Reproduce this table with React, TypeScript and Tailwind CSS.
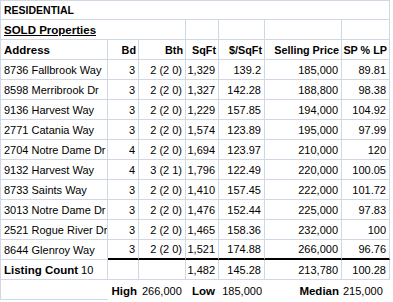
import React from 'react';

const line = 'border-[#d0d7e5]';

const rows = [
  ['8736 Fallbrook Way', '3', '2 (2 0)', '1,329', '139.2', '185,000', '89.81'],
  ['8598 Merribrook Dr', '3', '2 (2 0)', '1,327', '142.28', '188,800', '98.38'],
  ['9136 Harvest Way', '3', '2 (2 0)', '1,229', '157.85', '194,000', '104.92'],
  ['2771 Catania Way', '3', '2 (2 0)', '1,574', '123.89', '195,000', '97.99'],
  ['2704 Notre Dame Dr', '4', '2 (2 0)', '1,694', '123.97', '210,000', '120'],
  ['9132 Harvest Way', '4', '3 (2 1)', '1,796', '122.49', '220,000', '100.05'],
  ['8733 Saints Way', '3', '2 (2 0)', '1,410', '157.45', '222,000', '101.72'],
  ['3013 Notre Dame Dr', '3', '2 (2 0)', '1,476', '152.44', '225,000', '97.83'],
  ['2521 Rogue River Dr', '3', '2 (2 0)', '1,465', '158.36', '232,000', '100'],
  ['8644 Glenroy Way', '3', '2 (2 0)', '1,521', '174.88', '266,000', '96.76'],
];

const headers = ['Address', 'Bd', 'Bth', 'SqFt', '$/SqFt', 'Selling Price', 'SP % LP'];

const Cell = ({
  children,
  className = '',
}: {
  children?: React.ReactNode;
  className?: string;
}) => (
  <div
    className={`flex items-end h-5 pb-[2px] leading-[13px] whitespace-nowrap overflow-hidden ${className}`}
  >
    {children}
  </div>
);

export default function App() {
  return (
    <div
      className="w-[393px] h-[302px] bg-white text-black text-[11px] overflow-hidden"
      style={{ fontFamily: '"Liberation Sans", Arial, sans-serif' }}
    >
      <div className="grid grid-cols-[108px_31px_47px_33px_46px_77px_48px] w-[390px]">
        {/* title rows */}
        <Cell className={`col-span-7 border-l border-t border-r border-b ${line} pl-[3px] font-bold text-[10.5px]`}>
          RESIDENTIAL
        </Cell>
        <Cell className={`col-span-3 border-l border-r border-b ${line} pl-[3px] font-bold text-[11.5px]`}>
          <span className="underline underline-offset-[1px]">SOLD Properties</span>
        </Cell>
        {[0, 1, 2, 3].map((i) => (
          <Cell key={i} className={`border-r border-b ${line}`} />
        ))}

        {/* column headers */}
        {headers.map((h, i) => (
          <Cell
            key={h}
            className={`border-r border-b ${line} font-bold ${
              i === 0 ? 'border-l pl-[3px] text-[11.5px]' : 'justify-end pr-[2px] text-[10.8px]'
            }`}
          >
            {h}
          </Cell>
        ))}

        {/* sold listings */}
        {rows.map((r, ri) =>
          r.map((v, ci) => {
            const last = ri === rows.length - 1 && ci > 0;
            return (
              <Cell
                key={`${ri}-${ci}`}
                className={`border-r ${line} ${
                  last ? 'border-b-2 border-b-black h-5' : `border-b`
                } ${ci === 0 ? 'border-l pl-[3px]' : 'justify-end pr-[3px]'}`}
              >
                {v}
              </Cell>
            );
          })
        )}

        {/* averages */}
        <Cell className={`border-l border-r border-b ${line} pl-[3px]`}>
          <span className="font-bold text-[11.5px]">Listing Count</span>
          <span className="ml-[3px]">10</span>
        </Cell>
        <Cell className={`border-r border-b ${line}`} />
        <Cell className={`border-r border-b ${line}`} />
        <Cell className={`border-r border-b ${line} justify-end pr-[3px]`}>1,482</Cell>
        <Cell className={`border-r border-b ${line} justify-end pr-[3px]`}>145.28</Cell>
        <Cell className={`border-r border-b ${line} justify-end pr-[3px]`}>213,780</Cell>
        <Cell className={`border-r border-b ${line} justify-end pr-[3px]`}>100.28</Cell>

        {/* high / low / median */}
        <Cell className={`border-l border-b ${line}`} />
        <Cell className="justify-end pr-[2px] font-bold text-[11.5px]">High</Cell>
        <Cell className="pl-[3px]">266,000</Cell>
        <Cell className="justify-end pr-[4px] font-bold text-[11.5px]">Low</Cell>
        <Cell className="justify-end pr-[3px]">185,000</Cell>
        <Cell className="justify-end pr-[3px] font-bold text-[11.5px]">Median</Cell>
        <Cell className="pl-[1px]">215,000</Cell>
      </div>
    </div>
  );
}
